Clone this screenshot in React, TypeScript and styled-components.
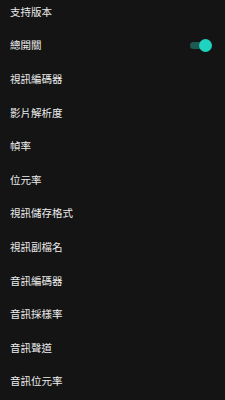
import { ReactElement, useState } from 'react';
import styled, { createGlobalStyle } from 'styled-components';

const GlobalStyle = createGlobalStyle`
  html, body {
    margin: 0;
    padding: 0;
    background: #141414;
  }
  body {
    font-family: "Noto Sans CJK TC", "Noto Sans", sans-serif;
  }
`;

const Page = styled.div`
  width: 225px;
  height: 400px;
  overflow: hidden;
  background: #141414;
`;

const List = styled.div`
  display: flex;
  flex-direction: column;
  margin-top: -4.8px;
`;

const Row = styled.div`
  display: flex;
  align-items: center;
  justify-content: space-between;
  height: 33.6px;
  padding: 0 17px 0 10px;
  box-sizing: border-box;
`;

const Label = styled.span`
  font-size: 10.5px;
  font-weight: 400;
  line-height: 1;
  color: #ececec;
`;

const Track = styled.button<{ $on: boolean }>`
  position: relative;
  width: 18px;
  height: 7px;
  padding: 0;
  border: none;
  border-radius: 4px;
  background: ${(p) => (p.$on ? '#1c5a52' : '#444')};
  cursor: pointer;
`;

const Thumb = styled.span<{ $on: boolean }>`
  position: absolute;
  top: 50%;
  left: ${(p) => (p.$on ? '9px' : '-4px')};
  width: 13px;
  height: 13px;
  margin-top: -6.5px;
  border-radius: 50%;
  background: ${(p) => (p.$on ? '#1ed3bf' : '#bbb')};
`;

const items = [
  '支持版本',
  '總開關',
  '視訊編碼器',
  '影片解析度',
  '幀率',
  '位元率',
  '視訊儲存格式',
  '視訊副檔名',
  '音訊編碼器',
  '音訊採樣率',
  '音訊聲道',
  '音訊位元率',
];

const App = (): ReactElement => {
  const [enabled, setEnabled] = useState(true);

  return (
    <Page>
      <GlobalStyle />
      <List>
        {items.map((label) => (
          <Row key={label}>
            <Label>{label}</Label>
            {label === '總開關' && (
              <Track $on={enabled} onClick={() => setEnabled(!enabled)}>
                <Thumb $on={enabled} />
              </Track>
            )}
          </Row>
        ))}
      </List>
    </Page>
  );
};

export default App;
